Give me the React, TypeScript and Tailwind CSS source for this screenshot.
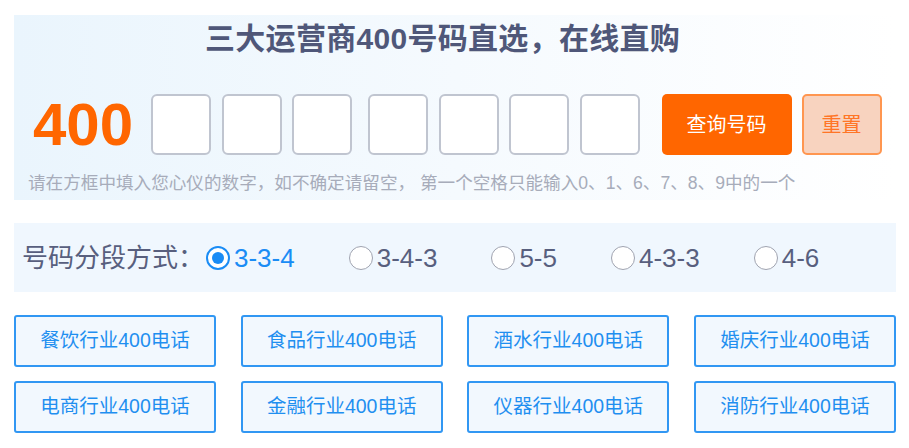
import { useState } from 'react';

const FONT = { fontFamily: '"Liberation Sans", "Noto Sans CJK SC", sans-serif' };

const modes = ['3-3-4', '3-4-3', '5-5', '4-3-3', '4-6'];

const industries = [
  '餐饮行业400电话',
  '食品行业400电话',
  '酒水行业400电话',
  '婚庆行业400电话',
  '电商行业400电话',
  '金融行业400电话',
  '仪器行业400电话',
  '消防行业400电话',
];

const DigitBox = ({ className = '' }: { className?: string }) => (
  <div
    className={`h-[61px] w-[60px] shrink-0 rounded-[6px] border-2 border-[#c0c5d0] bg-white ${className}`}
  />
);

const App = () => {
  const [mode, setMode] = useState('3-3-4');

  return (
    <div className="h-[448px] w-[909px] overflow-hidden bg-white" style={FONT}>
      {/* search panel */}
      <div className="mx-[14px] mt-[15px] h-[185px] w-[882px] bg-gradient-to-r from-[#eaf5fd] via-[#f5fafe] to-white">
        <h1 className="pl-[191px] pt-[6px] text-[30px] font-bold leading-[36px] tracking-[0.3px] text-[#4f5779]">
          三大运营商400号码直选，在线直购
        </h1>

        <div className="mt-[37px] flex items-center pl-[19px]">
          <span className="text-[60px] font-bold leading-none text-[#ff6600]">400</span>
          <div className="ml-[18px] flex gap-[10.5px]">
            <DigitBox />
            <DigitBox />
            <DigitBox />
            <DigitBox className="ml-[5.5px]" />
            <DigitBox />
            <DigitBox />
            <DigitBox />
          </div>
          <button className="ml-[22px] h-[61px] w-[130px] rounded-[5px] bg-[#ff6600] text-[20px] text-white">
            查询号码
          </button>
          <button className="ml-[10px] h-[61px] w-[80px] rounded-[5px] border-2 border-[#ff9650] bg-[#f8d3bf] text-[20px] text-[#ff7526]">
            重置
          </button>
        </div>

        <p className="mt-[16px] pl-[14px] text-[17.6px] leading-[24px] text-[#a7acba]">
          请在方框中填入您心仪的数字，如不确定请留空，&nbsp;第一个空格只能输入0、1、6、7、8、9中的一个
        </p>
      </div>

      {/* segment mode */}
      <div className="mx-[14px] mt-[23px] flex h-[69px] w-[882px] items-center bg-[#f0f7fe] pl-[8px]">
        <span className="w-[184px] text-[26px] leading-none text-[#585f7e]">号码分段方式：</span>
        <div className="flex items-center gap-[54px]">
          {modes.map((m) => {
            const checked = m === mode;
            return (
              <label
                key={m}
                onClick={() => setMode(m)}
                className="flex cursor-pointer items-center gap-[4px]"
              >
                <span
                  className={
                    checked
                      ? 'flex h-[24px] w-[24px] items-center justify-center rounded-full border-2 border-[#1a8cf5] bg-white'
                      : 'h-[24px] w-[24px] rounded-full border border-[#9fa3b0] bg-white'
                  }
                >
                  {checked && <span className="h-[12px] w-[12px] rounded-full bg-[#1a8cf5]" />}
                </span>
                <span
                  className={`text-[26px] leading-none ${checked ? 'text-[#1a8cf5]' : 'text-[#585f7e]'}`}
                >
                  {m}
                </span>
              </label>
            );
          })}
        </div>
      </div>

      {/* industry links */}
      <div className="mx-[14px] mt-[23px] grid w-[882px] grid-cols-[repeat(4,202px)] justify-between gap-y-[14px]">
        {industries.map((name) => (
          <a
            key={name}
            href="#"
            className="flex h-[52px] items-center justify-center rounded-[3px] border-2 border-[#3197f3] bg-[#f2f8fe] text-[19.5px] text-[#1f8ff0]"
          >
            {name}
          </a>
        ))}
      </div>
    </div>
  );
};

export default App;
